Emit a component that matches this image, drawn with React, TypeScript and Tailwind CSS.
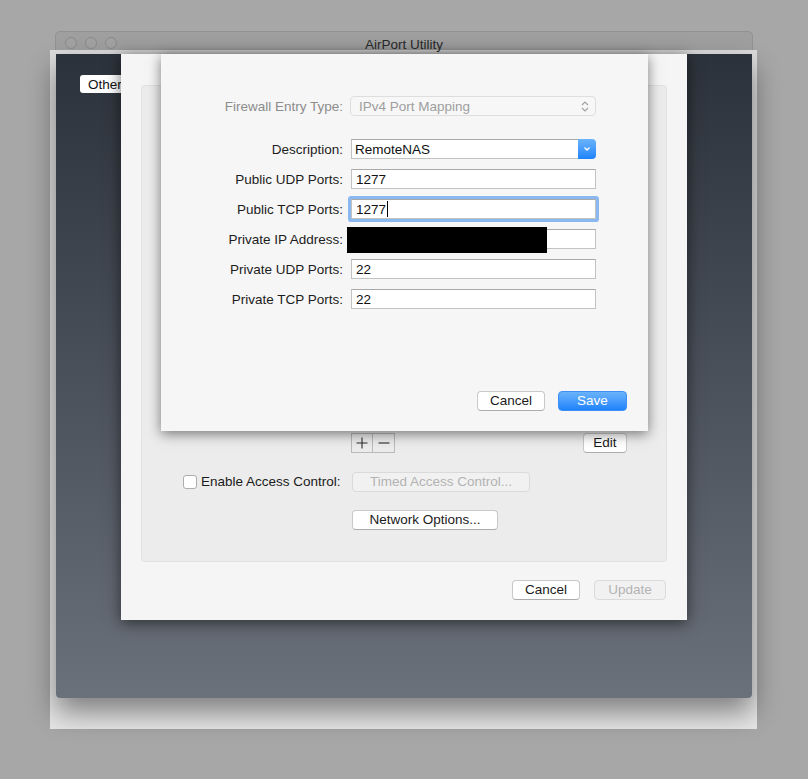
import React from "react";

const font = "font-['Liberation_Sans',Arial,sans-serif]";

function Field({ value, focused, cursor }: { value: string; focused?: boolean; cursor?: boolean }) {
  return (
    <div
      className={`h-[20px] w-[245px] bg-white border border-[#c2c2c2] border-t-[#a9a9a9] flex items-center pl-[4px] text-[13.5px] leading-[20px] text-[#111] ${
        focused ? "ring-[3px] ring-[#8cb8f2] rounded-[1px]" : ""
      }`}
    >
      <span className="h-[18px] leading-[20px]">{value}</span>
      {cursor && <span className="ml-[1px] h-[16px] w-px bg-black" />}
    </div>
  );
}

function Label({ children, dim }: { children: React.ReactNode; dim?: boolean }) {
  return (
    <div className={`h-[20px] text-right text-[13.5px] leading-[22px] ${dim ? "text-[#8c8c8c]" : "text-[#1c1c1c]"}`}>{children}</div>
  );
}

function Btn({ children, w, blue, disabled }: { children: React.ReactNode; w: string; blue?: boolean; disabled?: boolean }) {
  if (blue)
    return (
      <div
        className={`${w} h-[20px] rounded-[4px] bg-gradient-to-b from-[#6ab3fa] to-[#1b83fb] border border-[#3d8ef5] text-white text-[13.5px] flex items-center justify-center`}
      >
        {children}
      </div>
    );
  if (disabled)
    return (
      <div
        className={`${w} h-[20px] rounded-[4px] bg-[#f1f1f1] border border-[#dadada] text-[#b3b3b3] text-[13.5px] flex items-center justify-center`}
      >
        {children}
      </div>
    );
  return (
    <div
      className={`${w} h-[20px] rounded-[4px] bg-white border border-[#c9c9c9] border-b-[#acacac] text-[#1a1a1a] text-[13.5px] flex items-center justify-center`}
    >
      {children}
    </div>
  );
}

export default function App() {
  return (
    <div className={`relative w-[808px] h-[779px] overflow-hidden bg-[#a7a7a7] ${font}`}>
      {/* backdrop */}
      <div className="absolute left-[50px] top-[50px] w-[707px] h-[679px] bg-gradient-to-b from-[#dcdcdc] to-[#e6e6e6]" />

      {/* title bar */}
      <div className="absolute left-[55px] top-[31px] w-[698px] h-[19px] rounded-t-[5px] bg-[#9f9f9f] border-t border-x border-[#929292] flex items-center">
        <div className="flex gap-[8px] pl-[9px] pt-[3px]">
          <div className="w-[12px] h-[12px] rounded-full border border-[#8b8b8b] bg-[#a2a2a2]" />
          <div className="w-[12px] h-[12px] rounded-full border border-[#8b8b8b] bg-[#a2a2a2]" />
          <div className="w-[12px] h-[12px] rounded-full border border-[#8b8b8b] bg-[#a2a2a2]" />
        </div>
        <div className="absolute inset-x-0 top-[2px] text-center text-[13.5px] text-[#2a2a2a] pt-[1px]">AirPort Utility</div>
      </div>

      {/* window content */}
      <div className="absolute left-[56px] top-[54px] w-[696px] h-[644px] rounded-b-[4px] bg-gradient-to-b from-[#2c323b] to-[#6b717b] shadow-[0_14px_28px_rgba(0,0,0,0.45)]">
        {/* Other tab */}
        <div className="absolute left-[24px] top-[21px] w-[60px] h-[18px] rounded-[3px] bg-white text-[13.5px] text-[#111] pl-[8px] leading-[19px]">
          Other
        </div>

        {/* sheet 1 */}
        <div className="absolute left-[65px] top-0 w-[566px] h-[566px] bg-[#f5f5f5] shadow-[0_3px_14px_rgba(0,0,0,0.55)] flex flex-col pl-[20px] pr-[20px] pt-[31px]">
          <div className="w-[526px] h-[477px] rounded-[4px] bg-[#ececec] border border-[#e1e1e1] flex flex-col">
            <div className="h-[347px]" />
            <div className="flex items-center justify-between pl-[209px] pr-[39px]">
              <div className="flex">
                <div className="w-[22px] h-[20px] border border-[#b9b9b9] flex items-center justify-center">
                  <svg width="12" height="12" viewBox="0 0 12 12" stroke="#2a2a2a" strokeWidth="1.1">
                    <path d="M6 0.5 V11.5 M0.5 6 H11.5" />
                  </svg>
                </div>
                <div className="w-[22px] h-[20px] border border-l-0 border-[#b9b9b9] flex items-center justify-center">
                  <svg width="12" height="12" viewBox="0 0 12 12" stroke="#2a2a2a" strokeWidth="1.1">
                    <path d="M0.5 6 H11.5" />
                  </svg>
                </div>
              </div>
              <Btn w="w-[44px]">Edit</Btn>
            </div>
            <div className="flex items-center mt-[19px] pl-[41px]">
              <div className="w-[169px] flex items-center">
                <div className="w-[14px] h-[14px] rounded-[3px] bg-white border border-[#adadad]" />
                <span className="ml-[4px] text-[13.5px] text-[#1a1a1a]">Enable Access Control:</span>
              </div>
              <Btn w="w-[178px]" disabled>
                Timed Access Control...
              </Btn>
            </div>
            <div className="mt-[18px] pl-[210px]">
              <Btn w="w-[146px]">Network Options...</Btn>
            </div>
          </div>
          <div className="flex justify-end gap-[14px] mt-[18px] pr-px">
            <Btn w="w-[68px]">Cancel</Btn>
            <Btn w="w-[72px]" disabled>
              Update
            </Btn>
          </div>
        </div>

        {/* dialog sheet */}
        <div className="absolute left-[105px] top-0 w-[487px] h-[377px] bg-[#f6f6f6] shadow-[0_3px_12px_rgba(0,0,0,0.5)] flex flex-col pt-[42px]">
          <div className="grid grid-cols-[182px_246px] gap-x-[7px] items-center">
            <Label dim>Firewall Entry Type:</Label>
            <div className="h-[20px] w-[246px] rounded-[4px] border border-[#dedede] bg-[#f7f7f7] flex items-center justify-between pl-[8px] pr-[6px] text-[13.5px] text-[#9e9e9e]">
              <span className="h-[18px] leading-[20px]">IPv4 Port Mapping</span>
              <svg width="8" height="13" viewBox="0 0 8 13" fill="none" stroke="#a3a3a3" strokeWidth="1.2">
                <path d="M1 5 L4 2 L7 5" />
                <path d="M1 8 L4 11 L7 8" />
              </svg>
            </div>
          </div>
          <div className="grid grid-cols-[182px_245px] gap-x-[8px] gap-y-[10px] items-center mt-[23px]">
            <Label>Description:</Label>
            <div className="flex h-[20px] w-[245px]">
              <div className="flex-1 bg-white border border-[#c2c2c2] border-t-[#a9a9a9] border-r-0 flex items-center pl-[3px] text-[13.5px] text-[#111]">
                <span className="h-[18px] leading-[20px]">RemoteNAS</span>
              </div>
              <div className="w-[18px] h-[20px] rounded-r-[4px] bg-gradient-to-b from-[#6ab3fa] to-[#1b83fb] flex items-center justify-center">
                <svg width="8" height="6" viewBox="0 0 8 6" fill="none" stroke="white" strokeWidth="1.4">
                  <path d="M1.5 1.5 L4 4 L6.5 1.5" />
                </svg>
              </div>
            </div>
            <Label>Public UDP Ports:</Label>
            <Field value="1277" />
            <Label>Public TCP Ports:</Label>
            <Field value="1277" focused cursor />
            <Label>Private IP Address:</Label>
            <div className="relative h-[20px]">
              <Field value="" />
              <div className="absolute left-[-4px] top-[-2px] w-[200px] h-[26px] bg-black" />
            </div>
            <Label>Private UDP Ports:</Label>
            <Field value="22" />
            <Label>Private TCP Ports:</Label>
            <Field value="22" />
          </div>
          <div className="flex justify-end gap-[13px] pr-[21px] mt-[82px]">
            <Btn w="w-[68px]">Cancel</Btn>
            <Btn w="w-[69px]" blue>
              Save
            </Btn>
          </div>
        </div>
      </div>
    </div>
  );
}
